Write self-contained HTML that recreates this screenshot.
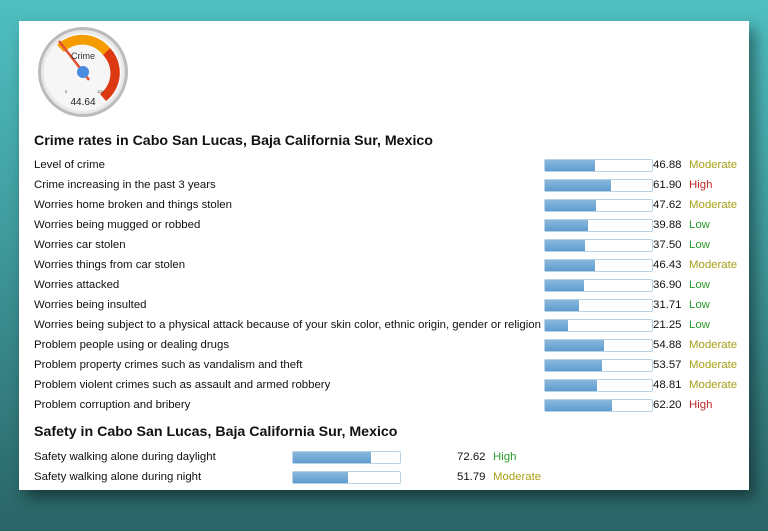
<!DOCTYPE html>
<html><head><style>
body{margin:0;width:768px;height:531px;overflow:hidden;background:linear-gradient(180deg,#4fbfc1 0%,#3f9a9c 45%,#2a6466 100%);font-family:"Liberation Sans",sans-serif;}
.card{position:absolute;left:19px;top:21px;width:730px;height:469px;background:#fff;box-shadow:6px 8px 14px rgba(0,0,0,.45);}
h2{position:absolute;left:15px;margin:0;font-size:14.2px;font-weight:bold;color:#111;}
.r{position:absolute;left:15px;font-size:11.4px;color:#111;height:20px;line-height:20px;width:720px;white-space:nowrap;}
.bar{position:absolute;top:4px;width:107px;height:11px;border:1px solid #b8d2e6;border-radius:2px;background:#fff;}
.bar i{display:block;height:100%;background:linear-gradient(#8ab8dc,#5f9cd0);}
.v{position:absolute;}
.M{color:#a8a018}.H{color:#c02a2a}.L{color:#2a9a2a}
</style></head><body>
<div class="card">
<svg style="position:absolute;left:18px;top:5px" width="92" height="92" viewBox="0 0 92 92">
<circle cx="46" cy="46" r="45" fill="#bbb"/>
<circle cx="46" cy="46" r="42" fill="#e8e8e8"/>
<circle cx="46" cy="46" r="39" fill="#f6f6f6"/>
<path d="M20 19 A36 36 0 0 1 73 22 L66 29 A26 26 0 0 0 27 26 Z" fill="#f59d00"/>
<path d="M73 22 A36 36 0 0 1 69 75 L63 68 A26 26 0 0 0 66 29 Z" fill="#dc3912"/>
<path d="M46 46 L22 15" stroke="#e05030" stroke-width="2.5"/>
<path d="M46 46 L52 54" stroke="#e05030" stroke-width="2.5"/>
<circle cx="46" cy="46" r="6" fill="#4a8ae0"/>
<text x="46" y="33" font-size="9" text-anchor="middle" fill="#333" font-family="Liberation Sans">Crime</text>
<text x="46" y="79" font-size="10" text-anchor="middle" fill="#222" font-family="Liberation Sans">44.64</text>
<text x="28" y="67" font-size="4" fill="#333">0</text>
<text x="60" y="67" font-size="4" fill="#333">120</text>
</svg>
<h2 style="top:112px">Crime rates in Cabo San Lucas, Baja California Sur, Mexico</h2>
<h2 style="top:403px">Safety in Cabo San Lucas, Baja California Sur, Mexico</h2>
<div id="rows"></div>
</div>
<script>
var d=[["Level of crime",46.88,"Moderate"],["Crime increasing in the past 3 years",61.90,"High"],["Worries home broken and things stolen",47.62,"Moderate"],["Worries being mugged or robbed",39.88,"Low"],["Worries car stolen",37.50,"Low"],["Worries things from car stolen",46.43,"Moderate"],["Worries attacked",36.90,"Low"],["Worries being insulted",31.71,"Low"],["Worries being subject to a physical attack because of your skin color, ethnic origin, gender or religion",21.25,"Low"],["Problem people using or dealing drugs",54.88,"Moderate"],["Problem property crimes such as vandalism and theft",53.57,"Moderate"],["Problem violent crimes such as assault and armed robbery",48.81,"Moderate"],["Problem corruption and bribery",62.20,"High"]];
var h="";
d.forEach(function(x,i){var t=134+i*20;
h+='<div class="r" style="top:'+t+'px">'+x[0]+'<div class="bar" style="left:510px"><i style="width:'+x[1]+'%"></i></div><span class="v" style="left:619px">'+x[1].toFixed(2)+'</span><span class="v '+x[2][0]+'" style="left:655px">'+x[2]+'</span></div>';});
[["Safety walking alone during daylight",72.62,"High"],["Safety walking alone during night",51.79,"Moderate"]].forEach(function(x,i){var t=426+i*20;
h+='<div class="r" style="top:'+t+'px">'+x[0]+'<div class="bar" style="left:258px"><i style="width:'+x[1]+'%"></i></div><span class="v" style="left:423px">'+x[1].toFixed(2)+'</span><span class="v '+(x[2]=="High"?"L":"M")+'" style="left:459px">'+x[2]+'</span></div>';});
document.getElementById("rows").innerHTML=h;
</script>
</body></html>
